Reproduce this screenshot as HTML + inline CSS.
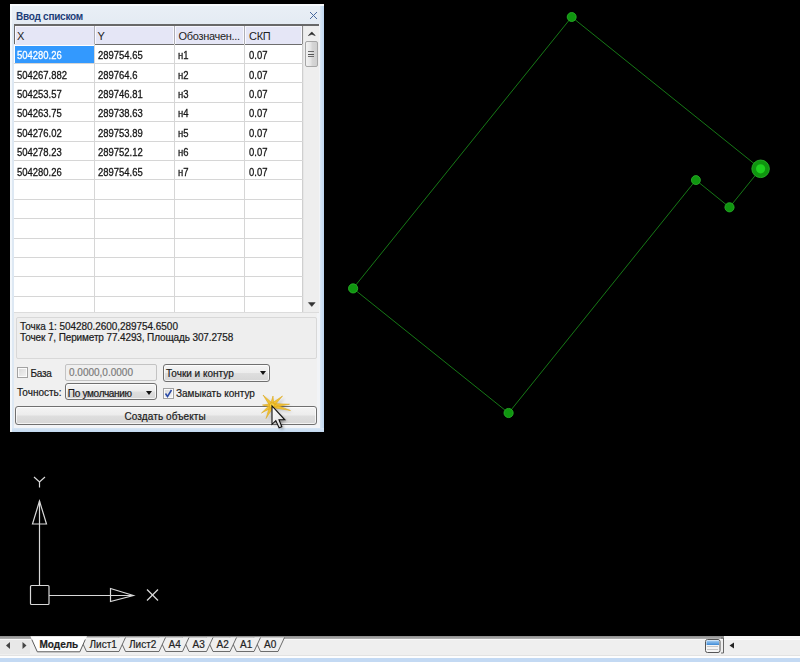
<!DOCTYPE html>
<html><head><meta charset="utf-8">
<style>
*{margin:0;padding:0;box-sizing:border-box}
html,body{width:800px;height:662px;overflow:hidden;background:#000}
body{position:relative;font-family:"Liberation Sans",sans-serif;color:#1a1a1a}
.a{position:absolute}
.t{position:absolute;white-space:nowrap;line-height:1;font-size:10px;color:#1b1b1b;-webkit-text-stroke:0.2px currentColor}
.tv{position:absolute;white-space:nowrap;line-height:1;font-size:11px;letter-spacing:0;transform:scaleX(0.86);transform-origin:0 0;color:#151515;-webkit-text-stroke:0.3px currentColor}
.th{position:absolute;white-space:nowrap;line-height:1;font-size:11px;color:#222}
.tv.sel{color:#fff}
.hl{position:absolute;left:14px;width:289px;height:1px;background:#d6d6d6}
.vl{position:absolute;top:44px;width:1px;height:268px;background:#d6d6d6}
.combo{position:absolute;border:1px solid #707070;border-radius:3px;background:linear-gradient(#f4f4f4 0%,#ececec 48%,#dedede 52%,#d6d6d6 100%);box-shadow:inset 0 0 0 1px rgba(255,255,255,0.7)}
.tri{position:absolute;width:0;height:0;border-left:3.5px solid transparent;border-right:3.5px solid transparent;border-top:4px solid #111}
.cb{position:absolute;width:11px;height:11px;border:1px solid #a2a2a2;background:linear-gradient(135deg,#d8d8d8,#f4f4f4);box-shadow:inset 0 0 0 1px #fbfbfb}
</style></head>
<body>
<!-- drawing -->
<svg class="a" style="left:0;top:0" width="800" height="662" viewBox="0 0 800 662">
  <g stroke="#167816" stroke-width="1" fill="none">
    <polyline points="571.7,17 760.6,168.8 729.5,207.3 695.9,180.1 508.6,413 353.1,288.4 571.7,17"/>
  </g>
  <g fill="#0f960f" stroke="#2cb52c" stroke-width="0.8">
    <circle cx="571.7" cy="17" r="4.5"/>
    <circle cx="729.5" cy="207.3" r="4.6"/>
    <circle cx="695.9" cy="180.1" r="4.5"/>
    <circle cx="508.6" cy="413" r="4.6"/>
    <circle cx="353.1" cy="288.4" r="4.6"/>
    <circle cx="760.6" cy="168.8" r="8.8"/>
  </g>
  <circle cx="760.6" cy="168.8" r="4.6" fill="#1ed01e"/>
  <!-- UCS icon -->
  <g stroke="#d8d8d8" stroke-width="1.2" fill="none">
    <line x1="39.5" y1="501" x2="39.5" y2="585.5"/>
    <polygon points="39.5,501 32.5,524 46.5,524"/>
    <rect x="30.5" y="585.5" width="18.5" height="19" rx="1"/>
    <line x1="49" y1="595.5" x2="133.5" y2="595.5"/>
    <polygon points="133.5,595.5 110.5,588.5 110.5,601.5"/>
    <polyline points="34,477 39.5,482 45,477"/>
    <line x1="39.5" y1="482" x2="39.5" y2="487.5"/>
    <line x1="147" y1="589.5" x2="158" y2="600.5"/>
    <line x1="158" y1="589.5" x2="147" y2="600.5"/>
  </g>
</svg>

<!-- dialog frame -->
<div class="a" style="left:10px;top:4px;width:314px;height:428px;background:#c9dcf1;border-radius:1px"></div>
<div class="a" style="left:10px;top:4px;width:2px;height:428px;background:#f3f7fb"></div>
<div class="a" style="left:12px;top:6px;width:2px;height:422px;background:#dde8f3"></div>
<div class="a" style="left:10px;top:4px;width:314px;height:2px;background:#f6f9fc"></div>
<div class="a" style="left:317px;top:24px;width:3px;height:404px;background:#f2f4f7"></div>
<div class="a" style="left:320px;top:6px;width:4px;height:426px;background:linear-gradient(90deg,#d9e7f5,#bed6ef)"></div>
<div class="a" style="left:12px;top:428px;width:312px;height:4px;background:linear-gradient(#d7e6f5,#c2d8f0)"></div>
<div class="a" style="left:14px;top:425px;width:306px;height:3px;background:#f2f4f7"></div>
<!-- title -->
<div class="a" style="left:12px;top:6px;width:308px;height:18px;background:linear-gradient(#e9eff6,#e4ebf3)"></div>
<div class="t" style="left:16px;top:12px;font-weight:bold;color:#1d3d78;letter-spacing:-0.25px;-webkit-text-stroke:0">Ввод списком</div>
<svg class="a" style="left:308px;top:10px" width="11" height="11" viewBox="0 0 11 11"><g stroke="#4a6a9e" stroke-width="1.0"><line x1="2" y1="2" x2="9" y2="9"/><line x1="9" y1="2" x2="2" y2="9"/></g></svg>

<!-- lower gray panel -->
<div class="a" style="left:14px;top:312px;width:305px;height:1px;background:#dcdcdc"></div>
<div class="a" style="left:14px;top:313px;width:303px;height:112px;background:#f0f0f0"></div>

<!-- table -->
<div class="a" style="left:14px;top:24px;width:289px;height:288px;background:#fff"></div>
<div class="a" style="left:14px;top:24px;width:289px;height:20.5px;background:#e5e6f6"></div>
<div class="a" style="left:15px;top:25.5px;width:79px;height:18.5px;border-left:1px solid #fafaff;border-top:1px solid #f6f6fd"></div>
<div class="a" style="left:95px;top:25.5px;width:79px;height:18px;border-left:1px solid #fafaff;border-top:1px solid #f6f6fd;border-right:1px solid #f8f8fe"></div>
<div class="a" style="left:175px;top:25.5px;width:69px;height:18px;border-left:1px solid #fafaff;border-top:1px solid #f6f6fd;border-right:1px solid #f8f8fe"></div>
<div class="a" style="left:245px;top:25.5px;width:57px;height:18px;border-left:1px solid #fafaff;border-top:1px solid #f6f6fd;border-right:1px solid #f8f8fe"></div>
<div class="a" style="left:93.8px;top:24px;width:1.3px;height:20.5px;background:#aeaeb6"></div>
<div class="a" style="left:173.8px;top:24px;width:1.3px;height:20.5px;background:#aeaeb6"></div>
<div class="a" style="left:243.5px;top:24px;width:1.3px;height:20.5px;background:#aeaeb6"></div>
<div class="a" style="left:302px;top:24px;width:1.5px;height:20.5px;background:#8a8a8a"></div>
<div class="a" style="left:14px;top:24px;width:305px;height:1.5px;background:#686868"></div>
<div class="a" style="left:14px;top:24px;width:1.2px;height:20px;background:#6a6a6a"></div>
<div class="a" style="left:95px;top:43.8px;width:208px;height:1.2px;background:#6e6e6e"></div>
<div class="vl" style="left:94px"></div>
<div class="vl" style="left:174px"></div>
<div class="vl" style="left:244px"></div>
<div class="vl" style="left:302px;background:#cfcfcf"></div>
<div class="a" style="left:15px;top:45.8px;width:79px;height:16.8px;background:#3399fe"></div>
<div class="hl" style="top:63.0px"></div>
<div class="hl" style="top:82.4px"></div>
<div class="hl" style="top:101.8px"></div>
<div class="hl" style="top:121.2px"></div>
<div class="hl" style="top:140.6px"></div>
<div class="hl" style="top:160.0px"></div>
<div class="hl" style="top:179.4px"></div>
<div class="hl" style="top:198.8px"></div>
<div class="hl" style="top:218.2px"></div>
<div class="hl" style="top:237.6px"></div>
<div class="hl" style="top:257.0px"></div>
<div class="hl" style="top:276.4px"></div>
<div class="hl" style="top:295.8px"></div>
<div class="tv sel" style="left:16.5px;top:50.1px">504280.26</div>
<div class="tv" style="left:97.5px;top:50.1px">289754.65</div>
<div class="tv" style="left:178px;top:50.1px">н1</div>
<div class="tv" style="left:248.5px;top:50.1px">0.07</div>
<div class="tv" style="left:16.5px;top:69.5px">504267.882</div>
<div class="tv" style="left:97.5px;top:69.5px">289764.6</div>
<div class="tv" style="left:178px;top:69.5px">н2</div>
<div class="tv" style="left:248.5px;top:69.5px">0.07</div>
<div class="tv" style="left:16.5px;top:88.9px">504253.57</div>
<div class="tv" style="left:97.5px;top:88.9px">289746.81</div>
<div class="tv" style="left:178px;top:88.9px">н3</div>
<div class="tv" style="left:248.5px;top:88.9px">0.07</div>
<div class="tv" style="left:16.5px;top:108.3px">504263.75</div>
<div class="tv" style="left:97.5px;top:108.3px">289738.63</div>
<div class="tv" style="left:178px;top:108.3px">н4</div>
<div class="tv" style="left:248.5px;top:108.3px">0.07</div>
<div class="tv" style="left:16.5px;top:127.7px">504276.02</div>
<div class="tv" style="left:97.5px;top:127.7px">289753.89</div>
<div class="tv" style="left:178px;top:127.7px">н5</div>
<div class="tv" style="left:248.5px;top:127.7px">0.07</div>
<div class="tv" style="left:16.5px;top:147.1px">504278.23</div>
<div class="tv" style="left:97.5px;top:147.1px">289752.12</div>
<div class="tv" style="left:178px;top:147.1px">н6</div>
<div class="tv" style="left:248.5px;top:147.1px">0.07</div>
<div class="tv" style="left:16.5px;top:166.5px">504280.26</div>
<div class="tv" style="left:97.5px;top:166.5px">289754.65</div>
<div class="tv" style="left:178px;top:166.5px">н7</div>
<div class="tv" style="left:248.5px;top:166.5px">0.07</div>
<div class="th" style="left:17px;top:31.1px">X</div>
<div class="th" style="left:97.5px;top:31.1px">Y</div>
<div class="th" style="left:178.5px;top:31.1px;letter-spacing:-0.3px">Обозначен...</div>
<div class="th" style="left:249px;top:31.1px;letter-spacing:-0.3px">СКП</div>

<!-- scrollbar -->
<div class="a" style="left:303px;top:25.5px;width:16px;height:286.5px;background:#eeeeee;border-left:1px solid #e6e6e6"></div>
<svg class="a" style="left:303px;top:26px" width="16" height="14" viewBox="303 26 16 14"><polygon points="308.4,35.6 311.8,31.9 315.2,35.6 311.8,34.3" fill="#2a2a2a" stroke="#2a2a2a" stroke-width="0.6" stroke-linejoin="round"/></svg>
<div class="a" style="left:305px;top:41.3px;width:12.5px;height:26px;border:1px solid #a6a6a6;border-radius:2px;background:linear-gradient(90deg,#f2f2f2,#e4e4e4 45%,#d6d6d6 55%,#cfcfcf)"></div>
<div class="a" style="left:308px;top:51.3px;width:5.5px;height:1px;background:#6a6a6a"></div>
<div class="a" style="left:308px;top:53.8px;width:5.5px;height:1px;background:#555"></div>
<div class="a" style="left:308px;top:56.3px;width:5.5px;height:1px;background:#6a6a6a"></div>
<svg class="a" style="left:303px;top:298px" width="16" height="14" viewBox="303 298 16 14"><polygon points="308.4,302.6 315.2,302.6 311.8,306.5" fill="#333" stroke="#333" stroke-width="0.5" stroke-linejoin="round"/></svg>

<!-- info panel -->
<div class="a" style="left:15.5px;top:317px;width:301.5px;height:41.5px;border:1px solid #d8d8d8;border-radius:2px;background:#eeeeee"></div>
<div class="t" style="left:20px;top:322.2px;letter-spacing:-0.05px">Точка 1: 504280.2600,289754.6500</div>
<div class="t" style="left:20px;top:333.2px;letter-spacing:-0.12px">Точек 7, Периметр 77.4293, Площадь 307.2758</div>

<!-- controls -->
<div class="cb" style="left:17px;top:367px"></div>
<div class="t" style="left:30.5px;top:368.7px;letter-spacing:-0.25px">База</div>
<div class="a" style="left:64.5px;top:363.5px;width:92px;height:17px;border:1px solid #c3c3c3;border-radius:2px;background:#efefef"></div>
<div class="t" style="left:69px;top:368.2px;color:#7c7c7c">0.0000,0.0000</div>
<div class="combo" style="left:162.5px;top:363.5px;width:107px;height:18px"></div>
<div class="t" style="left:166px;top:368.7px">Точки и контур</div>
<div class="tri" style="left:259.5px;top:371px"></div>
<div class="t" style="left:17px;top:388.2px">Точность:</div>
<div class="combo" style="left:64.5px;top:382.8px;width:92.5px;height:17.7px"></div>
<div class="t" style="left:67.8px;top:388.5px;letter-spacing:-0.3px">По умолчанию</div>
<div class="tri" style="left:146px;top:391px"></div>
<div class="cb" style="left:162.5px;top:387.5px"></div>
<svg class="a" style="left:162.5px;top:387.5px" width="11" height="11" viewBox="0 0 11 11"><path d="M2.5,5.5 L4.5,8.5 L8.5,2" stroke="#2a4aa6" stroke-width="1.5" fill="none"/></svg>
<div class="t" style="left:176px;top:389.2px">Замыкать контур</div>
<div class="combo" style="left:15px;top:406px;width:302px;height:18.5px"></div>
<div class="t" style="left:124.5px;top:412.2px;letter-spacing:0.1px">Создать объекты</div>

<!-- tab bar -->
<div class="a" style="left:0;top:636px;width:800px;height:26px;background:#efefef"></div>
<div class="a" style="left:0;top:636px;width:724px;height:2.5px;background:linear-gradient(#8c8c8c,#b4b4b4)"></div><div class="a" style="left:724px;top:636px;width:76px;height:2.5px;background:#f6f6f6"></div>
<div class="a" style="left:0;top:638.5px;width:800px;height:1.5px;background:#fbfbfb"></div>
<div class="a" style="left:0;top:654.5px;width:800px;height:1px;background:#e2e2e2"></div>
<div class="a" style="left:0;top:655.5px;width:800px;height:2px;background:#fdfdfd"></div>
<div class="a" style="left:0;top:657.5px;width:800px;height:4.5px;background:#c3d9f3"></div>
<div class="a" style="left:0;top:640px;width:30px;height:14px;background:#e8e8e8"></div>
<svg class="a" style="left:0;top:630px" width="800" height="32" viewBox="0 630 800 32">
  <g fill="#444"><polygon points="6,645.5 10,642 10,649"/><polygon points="26.5,645.5 22.5,642 22.5,649"/></g>
  <polygon points="254.0,637.5 260.5,651.5 278.0,651.5 284.5,637.5" fill="#efefef"/><polyline points="254.0,637.5 260.5,651.5 278.0,651.5 284.5,637.5" fill="none" stroke="#5c5c5c" stroke-width="0.9"/>
  <polygon points="230.0,637.5 236.5,651.5 254.0,651.5 260.5,637.5" fill="#efefef"/><polyline points="230.0,637.5 236.5,651.5 254.0,651.5 260.5,637.5" fill="none" stroke="#5c5c5c" stroke-width="0.9"/>
  <polygon points="206.5,637.5 213,651.5 230.0,651.5 236.5,637.5" fill="#efefef"/><polyline points="206.5,637.5 213,651.5 230.0,651.5 236.5,637.5" fill="none" stroke="#5c5c5c" stroke-width="0.9"/>
  <polygon points="182.5,637.5 189,651.5 206.5,651.5 213,637.5" fill="#efefef"/><polyline points="182.5,637.5 189,651.5 206.5,651.5 213,637.5" fill="none" stroke="#5c5c5c" stroke-width="0.9"/>
  <polygon points="159.0,637.5 165.5,651.5 182.5,651.5 189,637.5" fill="#efefef"/><polyline points="159.0,637.5 165.5,651.5 182.5,651.5 189,637.5" fill="none" stroke="#5c5c5c" stroke-width="0.9"/>
  <polygon points="119.0,637.5 125.5,651.5 159.0,651.5 165.5,637.5" fill="#efefef"/><polyline points="119.0,637.5 125.5,651.5 159.0,651.5 165.5,637.5" fill="none" stroke="#5c5c5c" stroke-width="0.9"/>
  <polygon points="80.0,637.5 86.5,651.5 119.0,651.5 125.5,637.5" fill="#efefef"/><polyline points="80.0,637.5 86.5,651.5 119.0,651.5 125.5,637.5" fill="none" stroke="#5c5c5c" stroke-width="0.9"/>
  <polygon points="30.4,636.2 37,651.5 80,651.5 87,636.2" fill="#fff"/><polyline points="31.8,639.5 37.3,651.8 79.8,651.8 85.3,639.5" fill="none" stroke="#4a4a4a" stroke-width="0.9"/>
  <rect x="705.5" y="639.5" width="14.5" height="13" rx="2" fill="#f4f4f4" stroke="#555" stroke-width="1"/>
  <defs><linearGradient id="bg1" x1="0" y1="0" x2="0" y2="1"><stop offset="0" stop-color="#a8d0f4"/><stop offset="1" stop-color="#3d8ad6"/></linearGradient></defs><rect x="706.5" y="640.5" width="12.5" height="4.5" fill="url(#bg1)"/>
  <line x1="707" y1="646.5" x2="718" y2="646.5" stroke="#bbb" stroke-width="0.8"/>
  <line x1="707" y1="649.5" x2="718" y2="649.5" stroke="#bbb" stroke-width="0.8"/>
  <polyline points="721,638 723.5,638 723.5,653 721,653" fill="none" stroke="#666" stroke-width="1"/>
  <polygon points="729.5,645.5 734,642.5 734,648.5" fill="#222"/>
</svg>
<div class="t" style="left:39.5px;top:640.3px;font-size:10px;font-weight:bold;color:#222">Модель</div>
<div class="t" style="left:89.5px;top:640.3px;font-size:10px;font-weight:normal;color:#222">Лист1</div>
<div class="t" style="left:129px;top:640.3px;font-size:10px;font-weight:normal;color:#222">Лист2</div>
<div class="t" style="left:168.5px;top:640.3px;font-size:10px;font-weight:normal;color:#222">A4</div>
<div class="t" style="left:192.5px;top:640.3px;font-size:10px;font-weight:normal;color:#222">A3</div>
<div class="t" style="left:216.5px;top:640.3px;font-size:10px;font-weight:normal;color:#222">A2</div>
<div class="t" style="left:240px;top:640.3px;font-size:10px;font-weight:normal;color:#222">A1</div>
<div class="t" style="left:264px;top:640.3px;font-size:10px;font-weight:normal;color:#222">A0</div>
<!-- burst + cursor -->
<svg class="a" style="left:240px;top:380px" width="70" height="60" viewBox="240 380 70 60">
  <defs>
    <filter id="blur" x="-50%" y="-50%" width="200%" height="200%"><feGaussianBlur stdDeviation="1.6"/></filter>
    <linearGradient id="cg" x1="0" y1="0" x2="1" y2="1"><stop offset="0" stop-color="#ffffff"/><stop offset="1" stop-color="#d8d8d8"/></linearGradient>
  </defs>
  <path d="M274.25,404.89 L263.00,395.00 L271.06,407.63 Z M273.98,406.71 L273.00,396.00 L269.81,406.27 Z M272.67,407.73 L282.50,396.00 L269.85,404.61 Z M271.15,407.67 L289.50,404.25 L270.85,403.48 Z M270.49,407.27 L290.50,410.50 L271.58,403.21 Z M271.59,403.21 L261.50,413.00 L274.03,406.63 Z M270.51,403.71 L266.00,418.50 L274.33,405.47 Z M273.11,403.46 L262.50,405.00 L272.89,407.65 Z" transform="translate(2.5,2)" fill="#000" opacity="0.22" filter="url(#blur)"/>
  <path d="M274.25,404.89 L263.00,395.00 L271.06,407.63 Z M273.98,406.71 L273.00,396.00 L269.81,406.27 Z M272.67,407.73 L282.50,396.00 L269.85,404.61 Z M271.15,407.67 L289.50,404.25 L270.85,403.48 Z M270.49,407.27 L290.50,410.50 L271.58,403.21 Z M271.59,403.21 L261.50,413.00 L274.03,406.63 Z M270.51,403.71 L266.00,418.50 L274.33,405.47 Z M273.11,403.46 L262.50,405.00 L272.89,407.65 Z" fill="#f2c232" stroke="#dcaa22" stroke-width="0.6" stroke-linejoin="round"/>
  <circle cx="272" cy="405.5" r="2.2" fill="#f7d040"/>
  <polygon points="272,406 272,424.3 275.8,420.6 279.1,427.7 281.8,426.7 279,419.8 284.8,419.8" transform="translate(2,2)" fill="#000" opacity="0.35" filter="url(#blur)"/>
  <polygon points="272,406 272,424.3 275.8,420.6 279.1,427.7 281.8,426.7 279,419.8 284.8,419.8" fill="url(#cg)" stroke="#111" stroke-width="1.1" stroke-linejoin="miter"/>
</svg>
</body></html>
